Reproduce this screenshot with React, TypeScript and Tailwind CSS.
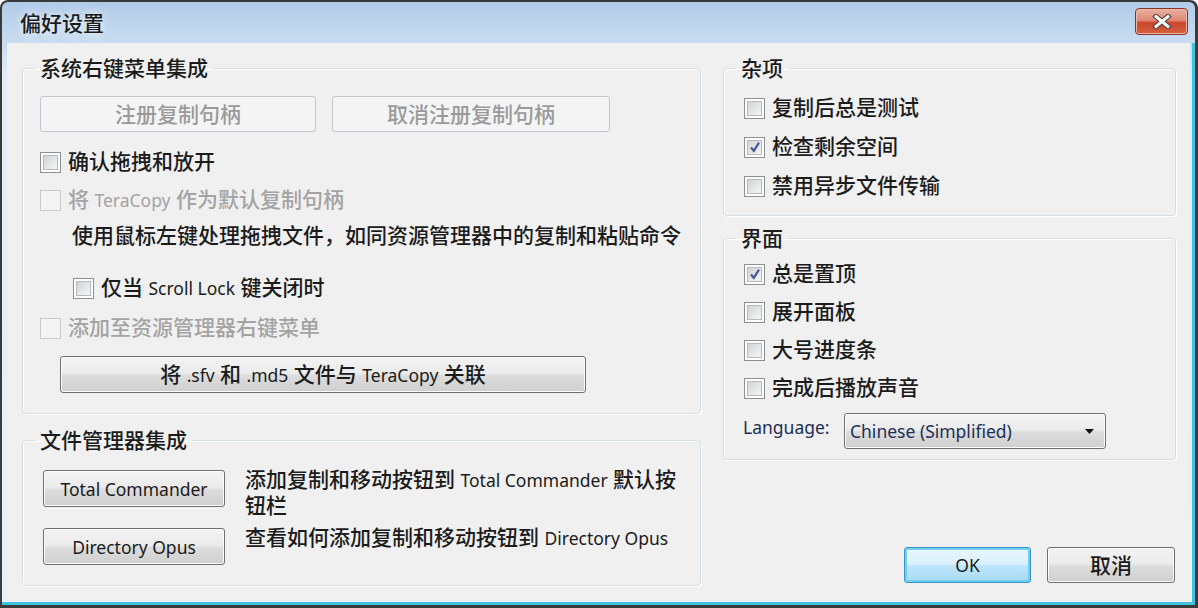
import React from "react";

type Kids = { children?: React.ReactNode; className?: string };

// latin runs are set smaller (and lighter) than the CJK text around them
function L({ children }: Kids) {
  return <span className="text-[17.5px] font-normal">{children}</span>;
}

function Check({ checked, disabled }: { checked?: boolean; disabled?: boolean }) {
  return (
    <span
      className={`flex h-[21px] w-[21px] shrink-0 border p-[2px] ${
        disabled ? "border-[#c9c9c9] bg-[#f4f4f4]" : "border-[#8e8f8f] bg-white"
      }`}
    >
      <span
        className={`relative flex h-full w-full items-center justify-center border ${
          disabled
            ? "border-transparent"
            : "border-[#b6bac0] bg-[linear-gradient(135deg,#cfd3d8,#f6f6f6)]"
        }`}
      >
        {checked && (
          <svg width="14" height="14" viewBox="0 0 14 14" className="absolute">
            <path d="M3 7.5 L5.8 10.8 L11 2.6" fill="none" stroke="#46599a" strokeWidth="2.2" />
          </svg>
        )}
      </span>
    </span>
  );
}

function Row({
  children,
  className = "",
  checked,
  disabled,
}: Kids & { checked?: boolean; disabled?: boolean }) {
  return (
    <label
      className={`flex h-[24px] items-center gap-[7px] ${
        disabled ? "text-[#a3a3a3]" : "text-[#1b1b1b]"
      } ${className}`}
    >
      <Check checked={checked} disabled={disabled} />
      <span>{children}</span>
    </label>
  );
}

function Btn({
  children,
  className = "",
  disabled,
  primary,
}: Kids & { disabled?: boolean; primary?: boolean }) {
  let look =
    "border-[#707070] text-[#1b1b1b] shadow-[inset_0_0_0_1px_#fbfbfb] bg-[linear-gradient(to_bottom,#f3f3f3_0%,#ebebeb_48%,#dddddd_52%,#cfcfcf_100%)]";
  if (disabled) look = "border-[#c4c7c9] text-[#9a9a9a] bg-[#f4f4f4]";
  if (primary)
    look =
      "border-[#3d8fc4] text-[#1b1b1b] shadow-[inset_0_0_0_2px_#6fd0f3] bg-[linear-gradient(to_bottom,#eaf6fd_0%,#d9f0fc_48%,#bee6fd_52%,#a7d9f5_100%)]";
  return (
    <button
      type="button"
      className={`flex shrink-0 items-center justify-center rounded-[3px] border leading-[24px] ${look} ${className}`}
    >
      {children}
    </button>
  );
}

function Group({ title, className = "", children }: Kids & { title: string }) {
  return (
    <fieldset
      className={`rounded-[4px] border border-[#d5dfe5] shadow-[inset_1px_1px_0_#ffffff,1px_1px_0_#ffffff] ${className}`}
    >
      <legend className="ml-[12px] px-[5px] leading-[24px] text-[#1b1b1b]">{title}</legend>
      {children}
    </fieldset>
  );
}

export default function App() {
  return (
    <div className="h-[608px] w-[1198px] rounded-t-[8px] bg-[#3a3a3a] pb-[3px] pl-[2px] pr-[3px] pt-[2px] font-['Noto_Sans','Noto_Sans_CJK_SC',sans-serif] text-[21px] font-medium">
      <div className="flex h-full flex-col rounded-t-[6px] bg-[linear-gradient(to_bottom,#b1cbe7_0px,#c9ddf1_41px,#e4eef8_80px,#e8f0f8_100%)]">
        {/* title bar */}
        <div className="flex h-[41px] shrink-0 items-center justify-between pl-[18px] pr-[7px]">
          <span className="leading-[24px] text-[#1b1b1b] [text-shadow:0_0_8px_#ffffff]">偏好设置</span>
          <button
            type="button"
            className="mb-[2px] flex h-[27px] w-[53px] items-center justify-center rounded-[4px] border border-[#843526] bg-[linear-gradient(to_bottom,#eab0a2_0%,#de8a76_45%,#c9462d_55%,#d4603f_100%)] shadow-[inset_0_0_0_1px_#f0b7a8]"
          >
            <svg width="20" height="15" viewBox="0 0 20 15">
              <path d="M4 2.5 L16 12.5 M16 2.5 L4 12.5" stroke="#55403c" strokeWidth="5.2" strokeLinecap="square" />
              <path d="M4 2.5 L16 12.5 M16 2.5 L4 12.5" stroke="#ffffff" strokeWidth="3" strokeLinecap="square" />
            </svg>
          </button>
        </div>

        {/* client */}
        <div className="flex flex-1 border-b-[3px] border-r-[3px] border-[#3ec4de] pl-[5px] pr-[2px]">
          <div className="flex flex-1 gap-[22px] bg-[#f0f0f0] pl-[15px] pt-[13px]">
            {/* left column */}
            <div className="flex w-[679px] flex-col">
              <Group title="系统右键菜单集成" className="h-[358px]">
                <div className="pl-[17px] pt-[16px]">
                  <div className="flex gap-[16px]">
                    <Btn disabled className="h-[36px] w-[276px]">注册复制句柄</Btn>
                    <Btn disabled className="h-[36px] w-[278px]">取消注册复制句柄</Btn>
                  </div>
                  <Row className="mt-[18px]">确认拖拽和放开</Row>
                  <Row disabled className="mt-[14px]">
                    将 <L>TeraCopy</L> 作为默认复制句柄
                  </Row>
                  <p className="ml-[32px] mt-[11px] h-[24px] leading-[24px] text-[#1b1b1b]">
                    使用鼠标左键处理拖拽文件，如同资源管理器中的复制和粘贴命令
                  </p>
                  <Row className="ml-[33px] mt-[29px]">
                    仅当 <L>Scroll Lock</L> 键关闭时
                  </Row>
                  <Row disabled className="mt-[16px]">添加至资源管理器右键菜单</Row>
                  <Btn className="ml-[20px] mt-[16px] h-[37px] w-[526px]">
                    <span>
                      将 <L>.sfv</L> 和 <L>.md5</L> 文件与 <L>TeraCopy</L> 关联
                    </span>
                  </Btn>
                </div>
              </Group>

              <Group title="文件管理器集成" className="mt-[14px] h-[158px]">
                <div className="pl-[20px] pt-[18px]">
                  <div className="flex h-[37px] items-start gap-[20px]">
                    <Btn className="h-[37px] w-[182px]">
                      <L>Total Commander</L>
                    </Btn>
                    <p className="-mt-[3px] leading-[25px] text-[#1b1b1b]">
                      添加复制和移动按钮到 <L>Total Commander</L> 默认按
                      <br />
                      钮栏
                    </p>
                  </div>
                  <div className="mt-[21px] flex h-[37px] items-start gap-[20px]">
                    <Btn className="h-[37px] w-[182px]">
                      <L>Directory Opus</L>
                    </Btn>
                    <p className="-mt-[3px] leading-[25px] text-[#1b1b1b]">
                      查看如何添加复制和移动按钮到 <L>Directory Opus</L>
                    </p>
                  </div>
                </div>
              </Group>
            </div>

            {/* right column */}
            <div className="flex w-[453px] flex-col">
              <Group title="杂项" className="h-[160px]">
                <div className="flex flex-col gap-[15px] pl-[20px] pt-[16px]">
                  <Row>复制后总是测试</Row>
                  <Row checked>检查剩余空间</Row>
                  <Row>禁用异步文件传输</Row>
                </div>
              </Group>

              <Group title="界面" className="mt-[10px] h-[234px]">
                <div className="flex flex-col gap-[14px] pl-[20px] pt-[12px]">
                  <Row checked>总是置顶</Row>
                  <Row>展开面板</Row>
                  <Row>大号进度条</Row>
                  <Row>完成后播放声音</Row>
                </div>
                <div className="mt-[13px] flex items-start pl-[19px]">
                  <span className="mt-[2px] w-[101px] text-[17.5px] font-normal leading-[24px] text-[#1d2f57]">Language:</span>
                  <div className="flex h-[36px] w-[262px] items-center justify-between rounded-[3px] border border-[#707070] bg-[linear-gradient(to_bottom,#f3f3f3_0%,#ebebeb_48%,#dddddd_52%,#cfcfcf_100%)] pl-[5px] pr-[11px] shadow-[inset_0_0_0_1px_#fbfbfb]">
                    <span className="text-[17.5px] font-normal leading-[24px] text-[#1d2f57]">Chinese (Simplified)</span>
                    <svg width="9" height="5" viewBox="0 0 9 5">
                      <path d="M0 0 H9 L4.5 5 Z" fill="#111111" />
                    </svg>
                  </div>
                </div>
              </Group>

              <div className="mt-[87px] flex justify-end gap-[16px] pr-[1px]">
                <Btn primary className="h-[36px] w-[127px]">
                  <L>OK</L>
                </Btn>
                <Btn className="h-[36px] w-[128px]">取消</Btn>
              </div>
            </div>
          </div>
        </div>
      </div>
    </div>
  );
}
